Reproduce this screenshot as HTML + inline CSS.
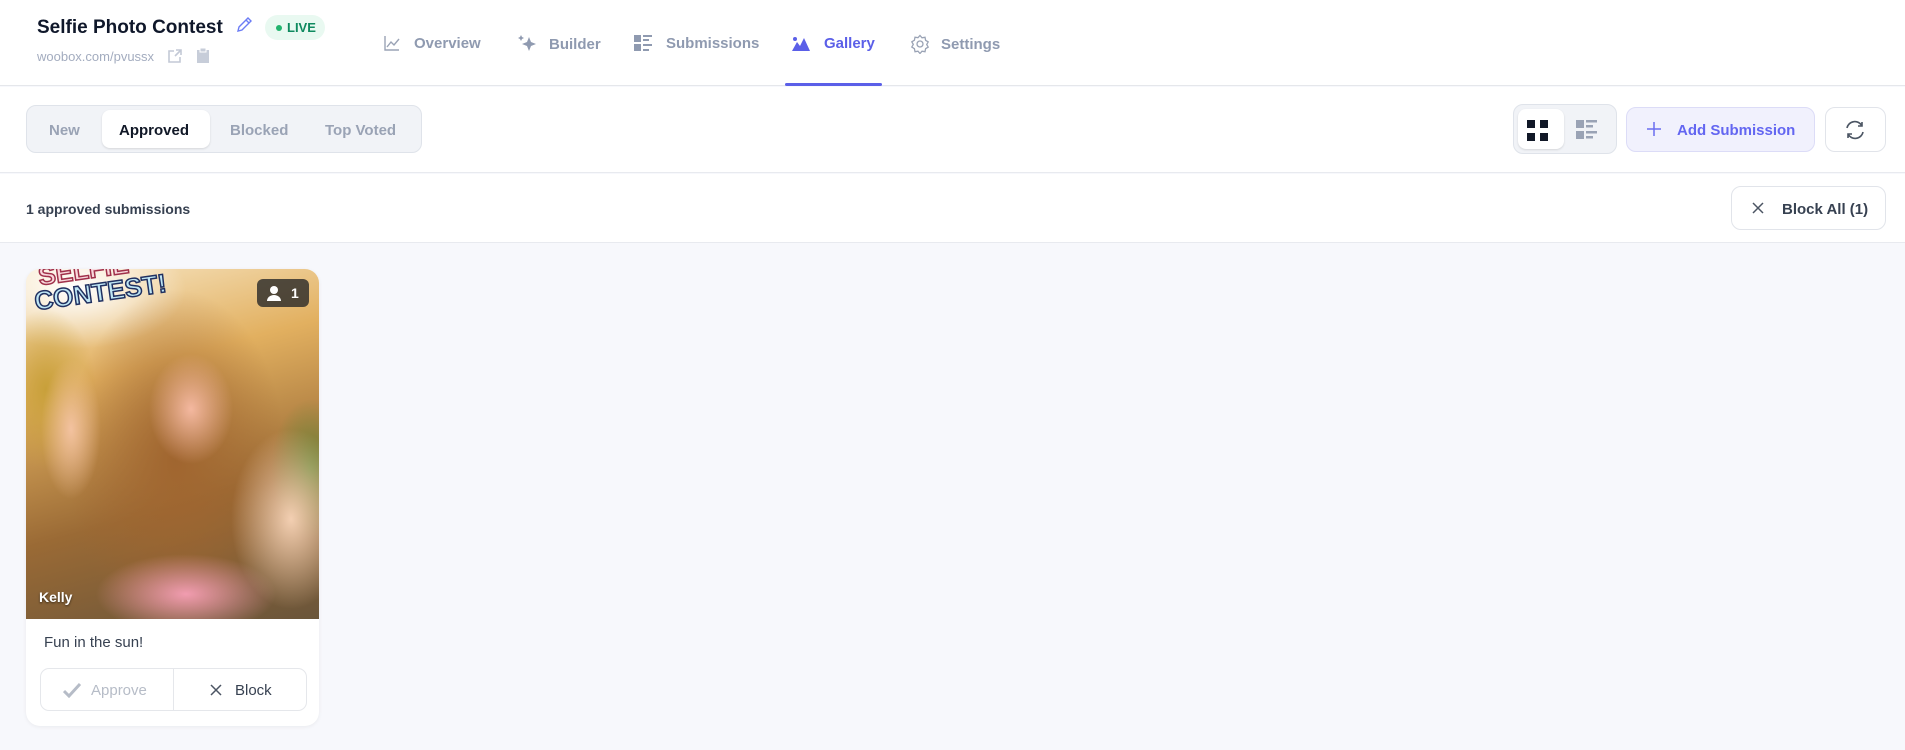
<!DOCTYPE html>
<html><head><meta charset="utf-8"><style>
*{box-sizing:border-box;margin:0;padding:0}
body{width:1905px;height:750px;overflow:hidden;font-family:"Liberation Sans",sans-serif;background:#f7f8fc;position:relative}
.abs{position:absolute}
.hdr{left:0;top:0;width:1905px;height:86px;background:#fff;border-bottom:1px solid #e5e7eb}
.nav{top:34px;font-size:15px;font-weight:bold;color:#8f9ab0;display:flex;align-items:center;gap:8px}
.tb{left:0;top:87px;width:1905px;height:86px;background:#fff;border-bottom:1px solid #e8eaef}
.row2{left:0;top:174px;width:1905px;height:69px;background:#fff;border-bottom:1px solid #e8eaef}
.seg{left:26px;top:105px;width:396px;height:48px;background:#f1f3f7;border:1px solid #dfe3ea;border-radius:10px}
.seg span{position:absolute;top:16px;font-size:15px;font-weight:bold;color:#9aa3b5}
.btn{border:1px solid #e1e4ea;border-radius:10px;background:#fff}
</style></head><body>
<div class="abs hdr"></div>
<div class="abs" style="left:37px;top:17px;font-size:19px;font-weight:bold;color:#0f172a">Selfie Photo Contest</div>
<svg class="abs" style="left:235px;top:16px" width="18" height="18" viewBox="0 0 18 18"><path d="M3 15l1-4 9-9 3 3-9 9z M11 4l3 3" fill="none" stroke="#6b7cf5" stroke-width="1.4"/></svg>
<div class="abs" style="left:265px;top:15px;width:60px;height:25px;border-radius:13px;background:#e9f9f1"></div>
<div class="abs" style="left:276px;top:25px;width:6px;height:6px;border-radius:3px;background:#22b46e"></div>
<div class="abs" style="left:287px;top:20px;font-size:13px;font-weight:bold;color:#0f8a5f">LIVE</div>
<div class="abs" style="left:37px;top:49px;font-size:13px;color:#a3acbf">woobox.com/pvussx</div>
<svg class="abs" style="left:167px;top:48px" width="16" height="16" viewBox="0 0 16 16"><path d="M7 3H2v11h11V9M9 2h5v5M14 2L8 8" fill="none" stroke="#c3c9d6" stroke-width="1.6"/></svg>
<svg class="abs" style="left:196px;top:47px" width="14" height="17" viewBox="0 0 14 17"><rect x="1" y="3" width="12" height="13" fill="#c7cdd9"/><rect x="4" y="1" width="6" height="4" fill="#c7cdd9" stroke="#fff"/></svg>

<div class="abs nav" style="left:383px"><svg width="18" height="18" viewBox="0 0 18 18"><path d="M2 2v14h14M4 13l4-5 3 3 5-6" fill="none" stroke="#9aa3b5" stroke-width="1.4"/></svg><span style="margin-left:5px">Overview</span></div>
<div class="abs nav" style="left:516px"><svg width="22" height="20" viewBox="0 0 22 20"><path d="M13 3l2 5 5 2-5 2-2 5-2-5-5-2 5-2z M5 1l1 2 2 1-2 1-1 2-1-2-2-1 2-1z" fill="#8f9ab0"/></svg><span style="margin-left:3px">Builder</span></div>
<div class="abs nav" style="left:633px"><svg width="20" height="18" viewBox="0 0 20 18"><rect x="1" y="1" width="7" height="7" fill="#8f9ab0"/><rect x="1" y="10" width="7" height="7" fill="#8f9ab0"/><rect x="10" y="1" width="9" height="2" fill="#8f9ab0"/><rect x="10" y="5" width="6" height="2" fill="#8f9ab0"/><rect x="10" y="10" width="9" height="2" fill="#8f9ab0"/><rect x="10" y="15" width="6" height="2" fill="#8f9ab0"/></svg><span style="margin-left:5px">Submissions</span></div>
<div class="abs nav" style="left:791px;color:#5b5fe8"><svg width="20" height="18" viewBox="0 0 20 18"><circle cx="4" cy="5" r="2" fill="#5b5fe8"/><path d="M1 17l5-9 3 4 4-8 6 13z" fill="#5b5fe8"/></svg><span style="margin-left:5px">Gallery</span></div>
<div class="abs nav" style="left:910px"><svg width="20" height="20" viewBox="0 0 20 20"><circle cx="10" cy="10" r="3" fill="none" stroke="#9aa3b5" stroke-width="1.3"/><path d="M10 1.5l2 2.3 3-.5.6 3 2.6 1.6-1.5 2.6 1.5 2.6-2.6 1.6-.6 3-3-.5-2 2.3-2-2.3-3 .5-.6-3L1.8 13l1.5-2.6L1.8 7.8l2.6-1.6.6-3 3 .5z" fill="none" stroke="#9aa3b5" stroke-width="1.3"/></svg><span style="margin-left:3px">Settings</span></div>
<div class="abs" style="left:785px;top:83px;width:97px;height:3px;background:#5b5fe8;border-radius:2px"></div>

<div class="abs tb"></div>
<div class="abs seg">
<div class="abs" style="left:75px;top:4px;width:108px;height:38px;background:#fff;border-radius:8px;box-shadow:0 1px 2px rgba(0,0,0,.12)"></div>
<span style="left:22px">New</span><span style="left:92px;color:#111827">Approved</span><span style="left:203px">Blocked</span><span style="left:298px">Top Voted</span></div>

<div class="abs" style="left:1513px;top:104px;width:104px;height:50px;background:#f1f3f7;border:1px solid #dfe3ea;border-radius:10px"></div>
<div class="abs" style="left:1518px;top:109px;width:46px;height:40px;background:#fff;border-radius:8px;box-shadow:0 1px 2px rgba(0,0,0,.12)"></div>
<svg class="abs" style="left:1527px;top:120px" width="22" height="22" viewBox="0 0 22 22"><rect x="0" y="0" width="8" height="8" fill="#111827"/><rect x="13" y="0" width="8" height="8" fill="#111827"/><rect x="0" y="13" width="8" height="8" fill="#111827"/><rect x="13" y="13" width="8" height="8" fill="#111827"/></svg>
<svg class="abs" style="left:1576px;top:120px" width="22" height="20" viewBox="0 0 22 20"><rect x="0" y="0" width="8" height="8" fill="#9aa3b5"/><rect x="0" y="11" width="8" height="8" fill="#9aa3b5"/><rect x="10" y="0" width="11" height="2.5" fill="#9aa3b5"/><rect x="10" y="5" width="7" height="2.5" fill="#9aa3b5"/><rect x="10" y="11" width="11" height="2.5" fill="#9aa3b5"/><rect x="10" y="16" width="7" height="2.5" fill="#9aa3b5"/></svg>
<div class="abs" style="left:1626px;top:107px;width:189px;height:45px;background:#f1f1fd;border:1px solid #dcdcf7;border-radius:10px"></div>
<svg class="abs" style="left:1647px;top:122px" width="14" height="14" viewBox="0 0 14 14"><path d="M7 0v14M0 7h14" stroke="#6b6ef0" stroke-width="1.5"/></svg>
<div class="abs" style="left:1677px;top:122px;font-size:15px;font-weight:bold;color:#6366f1">Add Submission</div>
<div class="abs btn" style="left:1825px;top:107px;width:61px;height:45px"></div>
<svg class="abs" style="left:1843px;top:118px" width="24" height="24" viewBox="0 0 24 24"><path d="M4 10a8 8 0 0 1 15-2M20 14a8 8 0 0 1-15 2M19 4v4h-4M5 20v-4h4" fill="none" stroke="#4b5563" stroke-width="1.6"/></svg>

<div class="abs row2"></div>
<div class="abs" style="left:26px;top:201px;font-size:14px;font-weight:bold;color:#374151">1 approved submissions</div>
<div class="abs btn" style="left:1731px;top:186px;width:155px;height:44px"></div>
<svg class="abs" style="left:1752px;top:202px" width="12" height="12" viewBox="0 0 12 12"><path d="M1 1l10 10M11 1L1 11" stroke="#4b5563" stroke-width="1.5"/></svg>
<div class="abs" style="left:1782px;top:201px;font-size:15px;font-weight:bold;color:#374151">Block All (1)</div>

<div class="abs" style="left:26px;top:269px;width:293px;height:457px;background:#fff;border-radius:14px;box-shadow:0 1px 4px rgba(0,0,0,.06);overflow:hidden">
<div style="position:absolute;left:0;top:0;width:293px;height:350px;background:
radial-gradient(ellipse 42px 55px at 165px 140px,#f4b8a0,rgba(244,184,160,0) 100%),
radial-gradient(ellipse 60px 90px at 265px 250px,#f3cfb2,rgba(243,207,178,0) 100%),
radial-gradient(ellipse 90px 40px at 160px 325px,#f19cb0,rgba(241,156,176,0) 100%),
radial-gradient(ellipse 30px 70px at 45px 160px,#f3c2a0,rgba(243,194,160,0) 100%),
radial-gradient(ellipse 110px 170px at 150px 190px,#a0652f,rgba(160,101,47,0) 100%),
radial-gradient(ellipse 50px 80px at 20px 120px,#c8a03a,rgba(200,160,58,0) 100%),
radial-gradient(ellipse 40px 70px at 285px 200px,#6d8a3a,rgba(109,138,58,0) 100%),
radial-gradient(ellipse 110px 60px at 50px 20px,#fff,rgba(255,255,255,0) 100%),
linear-gradient(165deg,#f8e8c8 0%,#e2b060 30%,#9a6a35 65%,#6a553a 100%)"></div>
<div style="position:absolute;left:12px;top:-14px;font-size:26px;font-weight:bold;color:#f9d8dc;transform:rotate(-8deg);-webkit-text-stroke:1.5px #a0304a">SELFIE</div>
<div style="position:absolute;left:8px;top:8px;font-size:26px;font-weight:bold;color:#bfe6f5;transform:rotate(-8deg);-webkit-text-stroke:1.5px #203060">CONTEST!</div>
<div style="position:absolute;left:231px;top:10px;width:52px;height:28px;border-radius:6px;background:rgba(40,40,40,.8)"></div>
<svg style="position:absolute;left:240px;top:16px" width="16" height="16" viewBox="0 0 16 16"><circle cx="8" cy="5" r="4" fill="#fff"/><path d="M1 16a7 6 0 0 1 14 0z" fill="#fff"/></svg>
<div style="position:absolute;left:265px;top:16px;font-size:14px;font-weight:bold;color:#fff">1</div>
<div style="position:absolute;left:13px;top:320px;font-size:14px;font-weight:bold;color:#fff;text-shadow:0 1px 2px rgba(0,0,0,.6)">Kelly</div>
<div style="position:absolute;left:18px;top:365px;font-size:15px;color:#374151">Fun in the sun!</div>
<div style="position:absolute;left:14px;top:399px;width:267px;height:43px;border:1px solid #e5e7eb;border-radius:9px"></div>
<div style="position:absolute;left:147px;top:400px;width:1px;height:41px;background:#e5e7eb"></div>
<svg style="position:absolute;left:37px;top:413px" width="18" height="16" viewBox="0 0 18 16"><path d="M1 9l5 5L17 2" fill="none" stroke="#b6bcc7" stroke-width="3"/></svg>
<div style="position:absolute;left:65px;top:413px;font-size:15px;color:#b6bcc7">Approve</div>
<svg style="position:absolute;left:184px;top:415px" width="12" height="12" viewBox="0 0 12 12"><path d="M1 1l10 10M11 1L1 11" stroke="#4b5563" stroke-width="1.5"/></svg>
<div style="position:absolute;left:209px;top:413px;font-size:15px;color:#374151">Block</div>
</div>
</body></html>
